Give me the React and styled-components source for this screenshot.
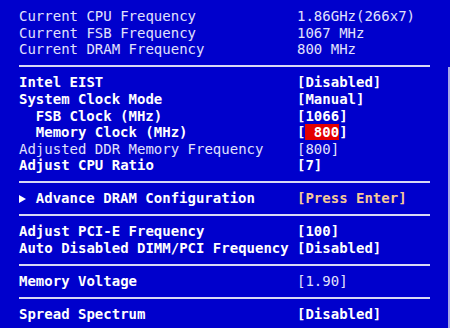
import React from "react";
import styled, { createGlobalStyle } from "styled-components";

const Global = createGlobalStyle`
  html, body { margin: 0; padding: 0; background: #0000cc; }
  body { width: 450px; height: 328px; overflow: hidden; }
`;

const Screen = styled.div`
  width: 450px;
  height: 328px;
  background: #0000cc;
  font-family: "DejaVu Sans Mono", "Liberation Mono", monospace;
  font-size: 14px;
  box-sizing: border-box;
  padding-top: 8.2px;
  display: flex;
  flex-direction: column;
  overflow: hidden;
`;

const Body = styled.div`
  flex: 1;
  border-right: 2px solid #a8a8e8;
  margin-top: -7.2px;
  padding-top: 7.2px;
`;

const Section = styled.div`
  display: flex;
  flex-direction: column;
  padding-left: 19px;
`;

const Separator = styled.div`
  margin: 7.2px 0 7.2px 19px;
  width: 411px;
  height: 2px;
  background: #d8d8f4;
`;

const Row = styled.div`
  display: grid;
  grid-template-columns: 278px 1fr;
  height: 16.6px;
  line-height: 16.6px;
  white-space: pre;
`;

const Label = styled.span`
  color: ${(p) => (p.$thin ? "#e2e2fc" : "#ffffff")};
  font-weight: ${(p) => (p.$thin ? "normal" : "bold")};
  padding-left: ${(p) => (p.$indent ? "16.8px" : "0")};
  display: flex;
  align-items: center;
`;

const Value = styled.span`
  color: ${(p) => (p.$accent ? "#f6c898" : p.$thin ? "#e2e2fc" : "#ffffff")};
  font-weight: ${(p) => (p.$thin ? "normal" : "bold")};
`;

const Highlight = styled.span`
  background: #e40000;
  color: #ffffff;
  display: inline-block;
  height: 16px;
  line-height: 16px;
`;

const Arrow = styled.span`
  display: inline-flex;
  width: 16.8px;
  height: 16.6px;
  align-items: center;
  svg { display: block; margin-top: 1px; }
`;

const header = [
  { label: "Current CPU Frequency", value: "1.86GHz(266x7)", thin: true },
  { label: "Current FSB Frequency", value: "1067 MHz", thin: true },
  { label: "Current DRAM Frequency", value: "800 MHz", thin: true },
];

const sections = [
  [
    { label: "Intel EIST", value: "[Disabled]" },
    { label: "System Clock Mode", value: "[Manual]" },
    { label: "FSB Clock (MHz)", value: "[1066]", indent: true },
    { label: "Memory Clock (MHz)", value: "800", indent: true, selected: true },
    { label: "Adjusted DDR Memory Frequency", value: "[800]", thin: true, valueThin: true },
    { label: "Adjust CPU Ratio", value: "[7]" },
  ],
  [{ label: "Advance DRAM Configuration", value: "[Press Enter]", submenu: true, accent: true }],
  [
    { label: "Adjust PCI-E Frequency", value: "[100]" },
    { label: "Auto Disabled DIMM/PCI Frequency", value: "[Disabled]" },
  ],
  [{ label: "Memory Voltage", value: "[1.90]", valueThin: true }],
  [{ label: "Spread Spectrum", value: "[Disabled]" }],
];

function Item({ r }) {
  return (
    <Row>
      <Label $thin={r.thin} $indent={r.indent}>
        {r.submenu && (
          <Arrow>
            <svg width="7" height="8" viewBox="0 0 7 8">
              <path d="M0 0 L7 4 L0 8 Z" fill="#ffffff" />
            </svg>
          </Arrow>
        )}
        {r.label}
      </Label>
      <Value $thin={r.thin || r.valueThin} $accent={r.accent}>
        {r.selected ? (
          <>
            [<Highlight>{" " + r.value}</Highlight>]
          </>
        ) : (
          r.value
        )}
      </Value>
    </Row>
  );
}

export default function App() {
  return (
    <>
      <Global />
      <Screen>
        <Section>
          {header.map((r) => (
            <Item key={r.label} r={r} />
          ))}
        </Section>
        <Separator />
        <Body>
          {sections.map((s, i) => (
            <React.Fragment key={i}>
              {i > 0 && <Separator />}
              <Section>
                {s.map((r) => (
                  <Item key={r.label} r={r} />
                ))}
              </Section>
            </React.Fragment>
          ))}
        </Body>
      </Screen>
    </>
  );
}
